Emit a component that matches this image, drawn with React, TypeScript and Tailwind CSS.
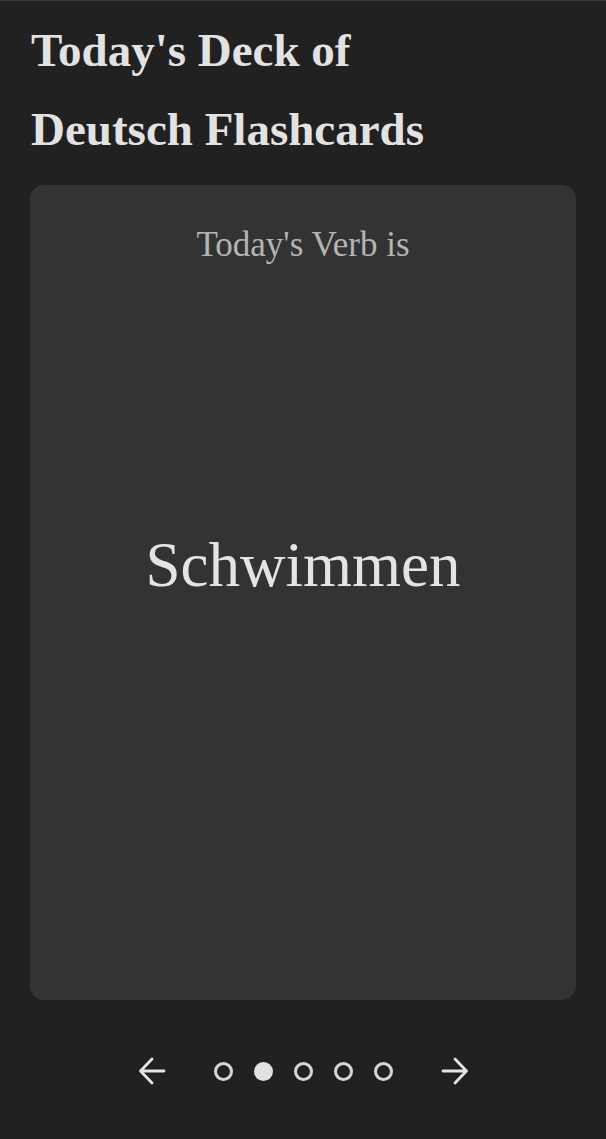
import * as React from 'react';

function Arrow({ dir }: { dir: 'left' | 'right' }) {
  return (
    <svg
      width="28"
      height="28"
      viewBox="0 0 28 28"
      fill="none"
      stroke="#e4e4e4"
      strokeWidth="2.8"
      strokeLinecap="round"
      strokeLinejoin="round"
      className={dir === 'right' ? 'rotate-180' : ''}
    >
      <path d="M26 14H2.5M14 2 2.5 14 14 26" />
    </svg>
  );
}

export default function App() {
  const active = 1;
  return (
    <div
      className="min-h-screen bg-[#212121] border-t border-[#3a3a3a] px-[30px]"
      style={{ fontFamily: '"Liberation Serif", serif' }}
    >
      <h1 className="pt-[10px] pl-[1px] text-[47px] leading-[79px] font-bold text-[#e2e2e2]">
        Today's Deck of
        <br />
        Deutsch Flashcards
      </h1>

      <section className="mt-[16px] h-[815px] rounded-[14px] bg-[#333333] flex flex-col items-center">
        <p className="pt-[43px] text-[35px] leading-[34px] text-[#b4b4b4]">
          Today's Verb is
        </p>
        <p className="mt-[272px] text-[63px] leading-[63px] text-[#e4e4e4]">
          Schwimmen
        </p>
      </section>

      <nav className="mt-[57px] flex items-center justify-center">
        <button className="w-[28px] h-[28px]">
          <Arrow dir="left" />
        </button>
        <div className="flex items-center gap-[21px] mx-[48px]">
          {[0, 1, 2, 3, 4].map((i) => (
            <span
              key={i}
              className={
                i === active
                  ? 'w-[19px] h-[19px] rounded-full bg-[#e2e2e2]'
                  : 'w-[19px] h-[19px] rounded-full border-[3px] border-[#d6d6d6]'
              }
            />
          ))}
        </div>
        <button className="w-[28px] h-[28px]">
          <Arrow dir="right" />
        </button>
      </nav>
    </div>
  );
}
